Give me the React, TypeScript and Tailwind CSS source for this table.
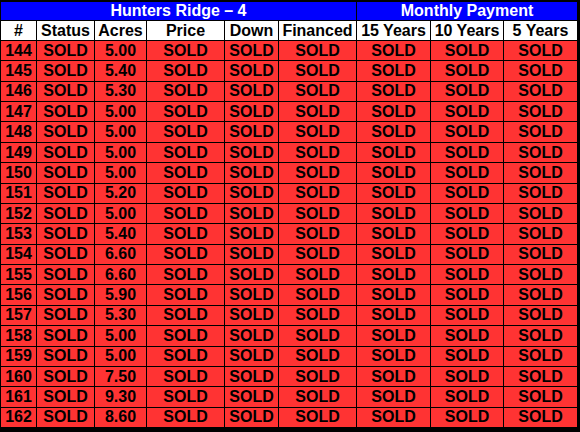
import React from 'react';

const rows: [number, string][] = [
  [144, '5.00'],
  [145, '5.40'],
  [146, '5.30'],
  [147, '5.00'],
  [148, '5.00'],
  [149, '5.00'],
  [150, '5.00'],
  [151, '5.20'],
  [152, '5.00'],
  [153, '5.40'],
  [154, '6.60'],
  [155, '6.60'],
  [156, '5.90'],
  [157, '5.30'],
  [158, '5.00'],
  [159, '5.00'],
  [160, '7.50'],
  [161, '9.30'],
  [162, '8.60'],
];

const headers = ['#', 'Status', 'Acres', 'Price', 'Down', 'Financed', '15 Years', '10 Years', '5 Years'];

function App() {
  return (
    <div
      className="w-[580px] h-[432px] bg-black pt-[2px] pb-[5px] pl-[1px] pr-[3px] grid gap-px grid-cols-[35px_57px_51px_77px_53px_77px_73px_72px_73px] grid-rows-[18px_19px_repeat(19,minmax(0,1fr))] text-[16px] font-bold leading-none text-black"
      style={{ fontFamily: '"Liberation Sans", Arial, sans-serif' }}
    >
      <div className="col-span-6 bg-[#0000ff] text-white flex items-center justify-center">Hunters Ridge – 4</div>
      <div className="col-span-3 bg-[#0000ff] text-white flex items-center justify-center">Monthly Payment</div>

      {headers.map((h) => (
        <div key={h} className="bg-white flex items-center justify-center whitespace-nowrap">
          {h}
        </div>
      ))}

      {rows.map(([lot, acres]) => (
        <React.Fragment key={lot}>
          <div className="bg-[#ff3333] flex items-center justify-center">{lot}</div>
          <div className="bg-[#ff3333] flex items-center justify-center">SOLD</div>
          <div className="bg-[#ff3333] flex items-center justify-center">{acres}</div>
          <div className="bg-[#ff3333] flex items-center justify-center">SOLD</div>
          <div className="bg-[#ff3333] flex items-center justify-center">SOLD</div>
          <div className="bg-[#ff3333] flex items-center justify-center">SOLD</div>
          <div className="bg-[#ff3333] flex items-center justify-center">SOLD</div>
          <div className="bg-[#ff3333] flex items-center justify-center">SOLD</div>
          <div className="bg-[#ff3333] flex items-center justify-center">SOLD</div>
        </React.Fragment>
      ))}
    </div>
  );
}

export default App;
